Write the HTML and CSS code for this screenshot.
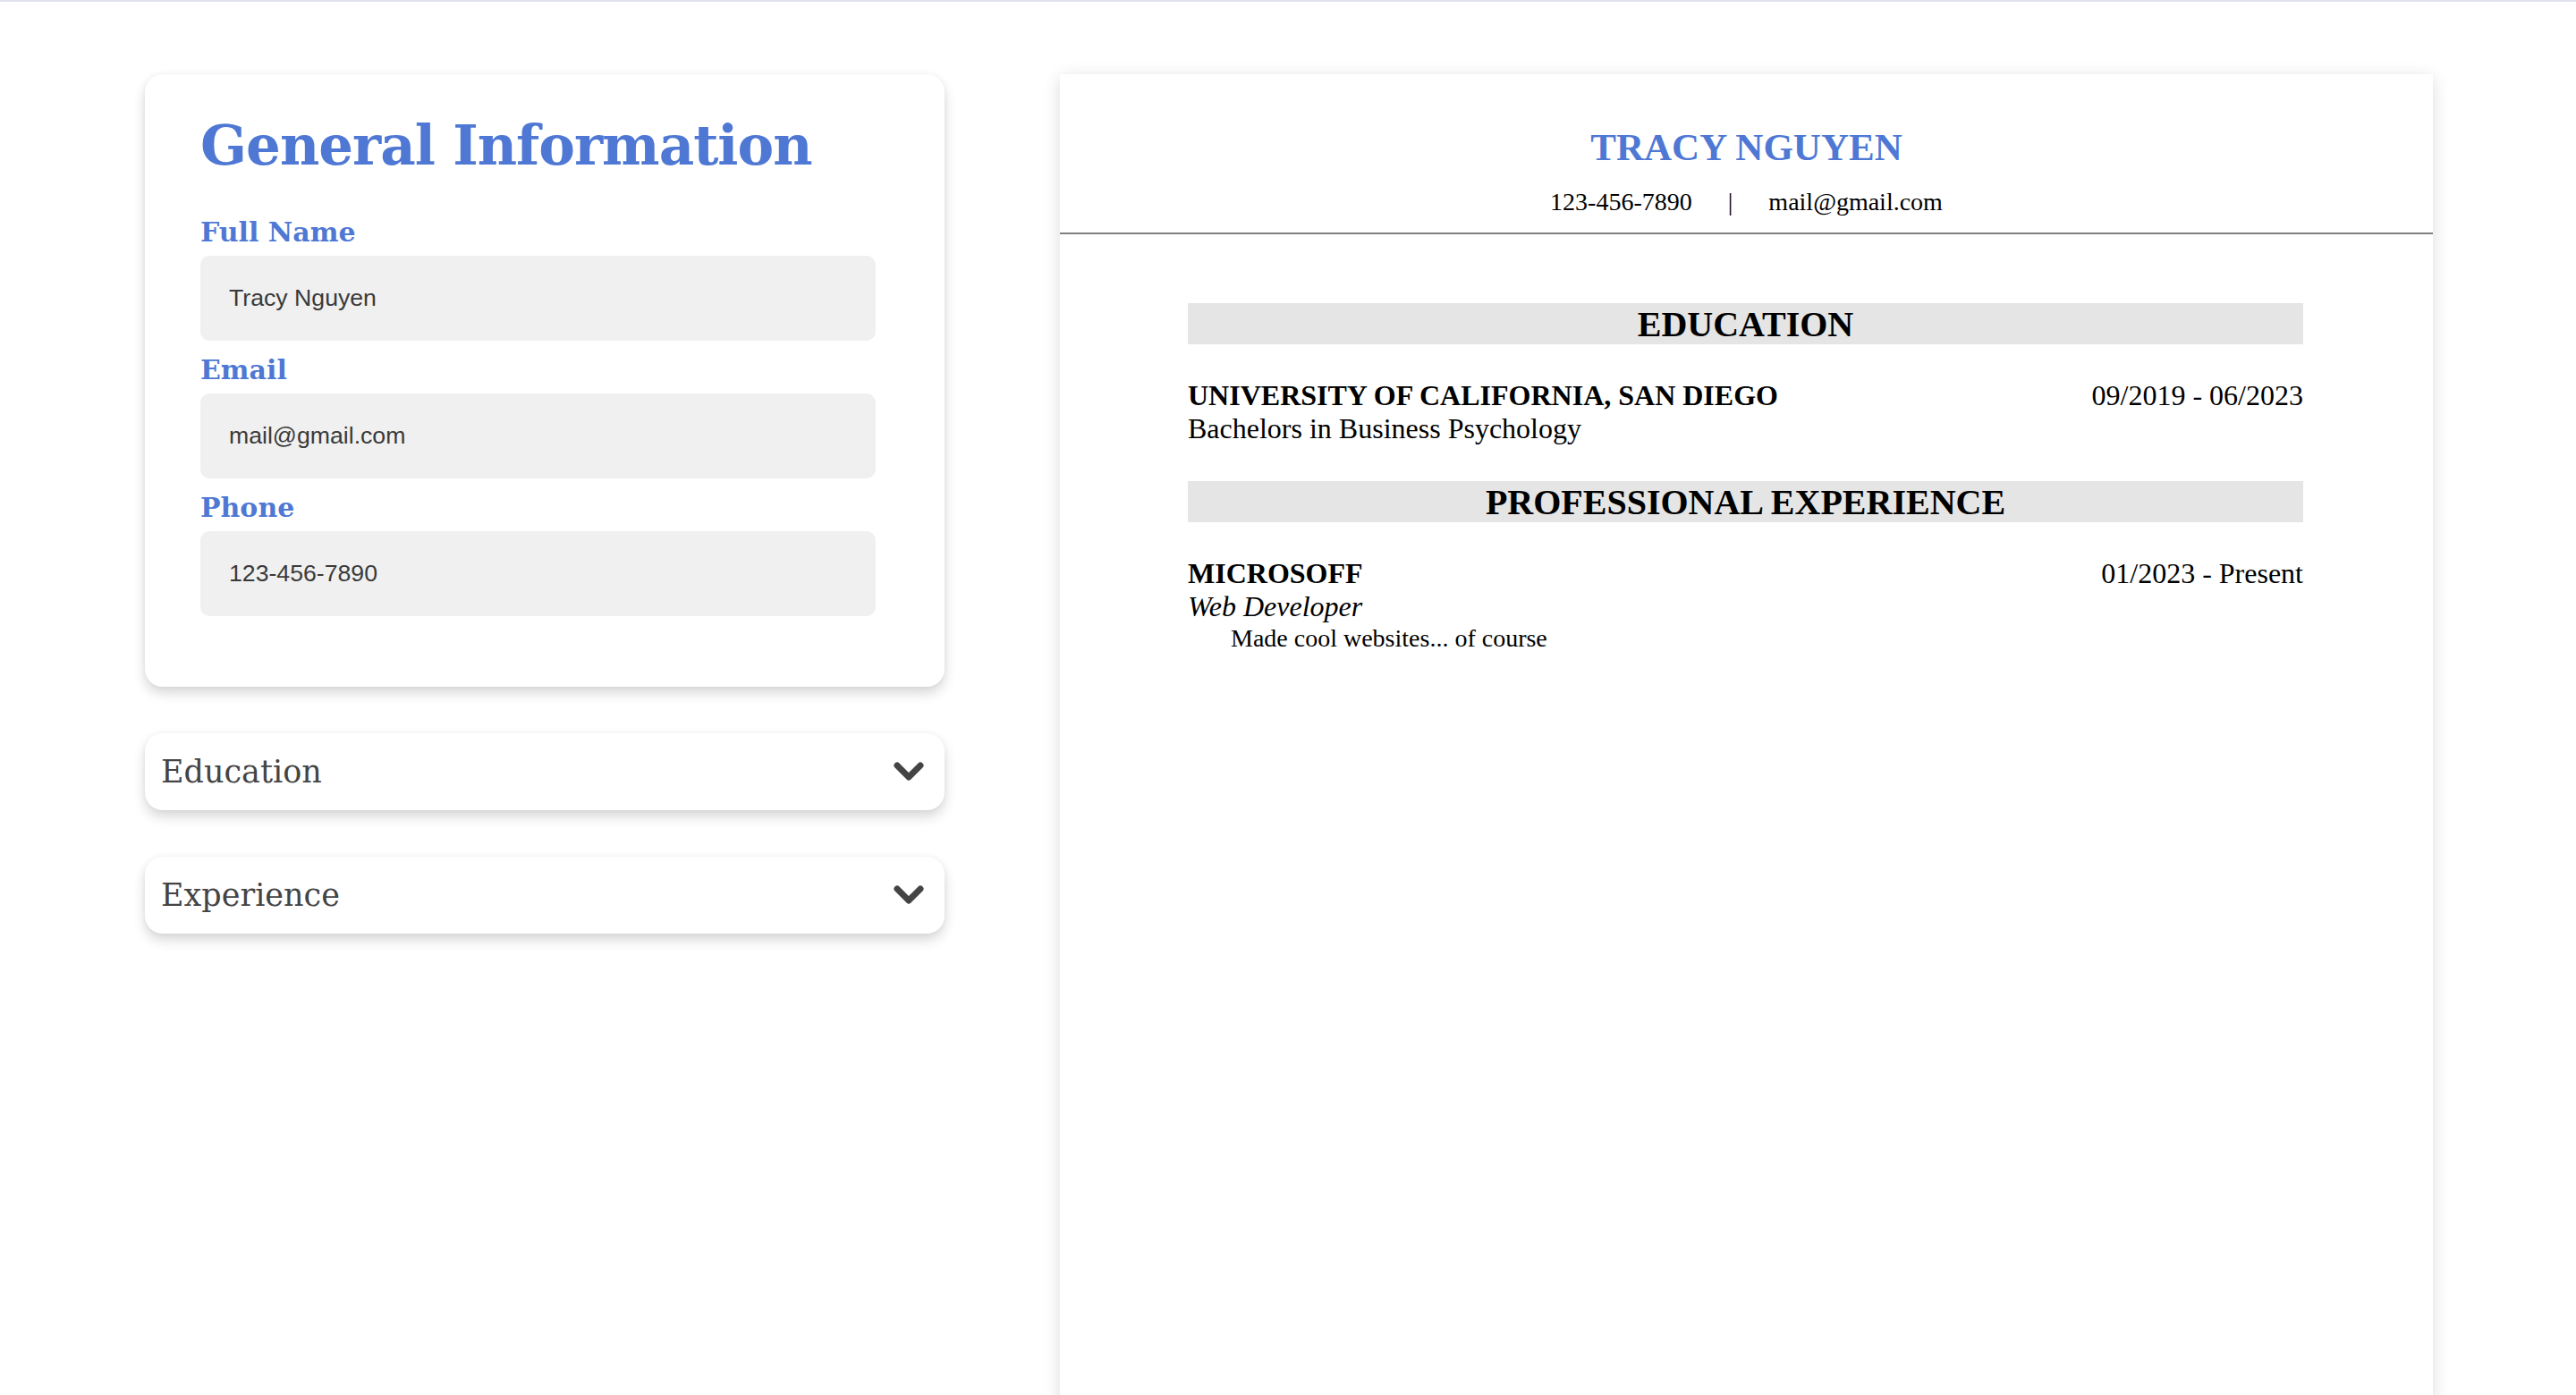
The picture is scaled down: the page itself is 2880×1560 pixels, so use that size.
FILE: index.html
```html
<!DOCTYPE html>
<html lang="en">
<head>
<meta charset="utf-8">
<title>CV Builder</title>
<link rel="stylesheet" href="styles.css">
</head>
<body>
<main class="app">
  <section class="editor">
    <div class="card general">
      <h1 class="card-title">General Information</h1>
      <div class="field">
        <label class="field-label" for="name">Full Name</label>
        <input class="field-input" id="name" type="text" value="Tracy Nguyen">
      </div>
      <div class="field">
        <label class="field-label" for="email">Email</label>
        <input class="field-input" id="email" type="text" value="mail@gmail.com">
      </div>
      <div class="field">
        <label class="field-label" for="phone">Phone</label>
        <input class="field-input" id="phone" type="text" value="123-456-7890">
      </div>
    </div>
    <button class="card toggle" type="button">
      <span class="toggle-label">Education</span>
      <svg class="chevron" viewBox="0 0 34 22" width="34" height="22"><polyline points="4,4 17,17 30,4" fill="none" stroke="#444" stroke-width="7" stroke-linecap="round" stroke-linejoin="round"/></svg>
    </button>
    <button class="card toggle" type="button">
      <span class="toggle-label">Experience</span>
      <svg class="chevron" viewBox="0 0 34 22" width="34" height="22"><polyline points="4,4 17,17 30,4" fill="none" stroke="#444" stroke-width="7" stroke-linecap="round" stroke-linejoin="round"/></svg>
    </button>
  </section>

  <section class="resume">
    <header class="resume-header">
      <h2 class="resume-name">TRACY NGUYEN</h2>
      <div class="resume-contact">
        <span>123-456-7890</span>
        <span class="sep">|</span>
        <span>mail@gmail.com</span>
      </div>
    </header>
    <div class="resume-body">
      <h3 class="section-bar">EDUCATION</h3>
      <div class="entry">
        <div class="entry-row">
          <span class="entry-title">UNIVERSITY OF CALIFORNIA, SAN DIEGO</span>
          <span class="entry-date">09/2019 - 06/2023</span>
        </div>
        <div class="entry-sub">Bachelors in Business Psychology</div>
      </div>
      <h3 class="section-bar">PROFESSIONAL EXPERIENCE</h3>
      <div class="entry">
        <div class="entry-row">
          <span class="entry-title">MICROSOFF</span>
          <span class="entry-date">01/2023 - Present</span>
        </div>
        <div class="entry-role">Web Developer</div>
        <p class="entry-desc">Made cool websites... of course</p>
      </div>
    </div>
  </section>
</main>
</body>
</html>
```

FILE: styles.css
```css
html, body {
  margin: 0;
  padding: 0;
  background: #ffffff;
}

body {
  border-top: 2px solid #dfe1ee;
  min-height: 1558px;
  overflow: hidden;
}

.app {
  display: flex;
  align-items: flex-start;
  gap: 129px;
  padding: 81px 160px 0 162px;
}

.editor {
  width: 894px;
  flex: none;
  display: flex;
  flex-direction: column;
  gap: 52px;
}

.card {
  background: #ffffff;
  border-radius: 20px;
  box-shadow: 0 7px 14px rgba(0, 0, 0, 0.16), 0 0 6px rgba(0, 0, 0, 0.04);
}

.general {
  padding: 35px 62px 79px;
  display: flex;
  flex-direction: column;
  gap: 13px;
}

.card-title {
  margin: 0 0 19px;
  font-family: "DejaVu Serif", Georgia, serif;
  font-weight: bold;
  font-size: 61px;
  line-height: 90px;
  color: #4f78d4;
  letter-spacing: -1px;
}

.field {
  display: flex;
  flex-direction: column;
  gap: 6px;
}

.field-label {
  font-family: "DejaVu Serif", Georgia, serif;
  font-weight: bold;
  font-size: 30px;
  line-height: 40px;
  color: #4f78d4;
}

.field-input {
  width: 755px;
  height: 95px;
  box-sizing: border-box;
  border: none;
  outline: none;
  border-radius: 10px;
  background: #f0f0f0;
  padding: 0 32px;
  font-family: "Liberation Sans", Arial, sans-serif;
  font-size: 26.67px;
  color: #3a3a3a;
}

.toggle {
  display: flex;
  align-items: center;
  justify-content: space-between;
  height: 86px;
  padding: 0 23px 0 18px;
  border: none;
  text-align: left;
  cursor: pointer;
}

.toggle-label {
  font-family: "DejaVu Serif", Georgia, serif;
  font-size: 35px;
  color: #444444;
}

.chevron {
  display: block;
}

.resume {
  flex: 1;
  min-height: 1500px;
  background: #ffffff;
  box-shadow: 0 4px 18px rgba(0, 0, 0, 0.14);
  font-family: "Liberation Serif", "Times New Roman", serif;
  color: #000000;
}

.resume-header {
  padding: 57px 0 18px;
  text-align: center;
  border-bottom: 2px solid #808080;
}

.resume-name {
  margin: 0;
  font-size: 43px;
  line-height: 50px;
  font-weight: bold;
  color: #4f78d4;
}

.resume-contact {
  margin-top: 20px;
  font-size: 28px;
  line-height: 32px;
  display: flex;
  justify-content: center;
  gap: 40px;
}

.resume-body {
  padding: 77px 145px 0 143px;
}

.section-bar {
  margin: 0;
  height: 46px;
  background: #e5e5e5;
  text-align: center;
  font-size: 40px;
  line-height: 48px;
  font-weight: bold;
}

.entry {
  padding: 39px 0 40px;
}

.entry-row {
  display: flex;
  justify-content: space-between;
  font-size: 32px;
  line-height: 37px;
}

.entry-title {
  font-weight: bold;
}

.entry-sub {
  font-size: 32px;
  line-height: 37px;
}

.entry-role {
  font-size: 32px;
  line-height: 37px;
  font-style: italic;
}

.entry-desc {
  margin: 0 0 0 48px;
  font-size: 28px;
  line-height: 33px;
}
```
